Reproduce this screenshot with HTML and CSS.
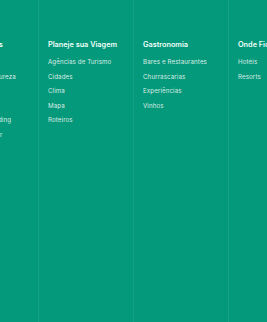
FILE: index.html
```html
<!DOCTYPE html>
<html lang="pt-BR">
<head>
  <meta charset="UTF-8" />
  <meta name="viewport" content="width=device-width, initial-scale=1.0"/>
  <title>Menu</title>
  <link rel="stylesheet" href="styles.css">
</head>
<body>
  <div class="menu">
    <div class="col">
      <h3>Ecoatividades</h3>
      <ul>
        <li>Trilhas</li>
        <li>Turismo de Natureza</li>
        <li>Cachoeiras</li>
        <li>Praias</li>
        <li>Rapel e Paragliding</li>
        <li>Esportes no Mar</li>
      </ul>
    </div>

    <div class="col">
      <h3>Planeje sua Viagem</h3>
      <ul>
        <li>Agências de Turismo</li>
        <li>Cidades</li>
        <li>Clima</li>
        <li>Mapa</li>
        <li>Roteiros</li>
      </ul>
    </div>

    <div class="col">
      <h3>Gastronomia</h3>
      <ul>
        <li>Bares e Restaurantes</li>
        <li>Churrascarias</li>
        <li>Experiências</li>
        <li>Vinhos</li>
      </ul>
    </div>

    <div class="col">
      <h3>Onde Ficar</h3>
      <ul>
        <li>Hotéis</li>
        <li>Resorts</li>
      </ul>
    </div>
  </div>
</body>
</html>
```

FILE: styles.css
```css
* {
  box-sizing: border-box;
}

html, body {
  margin: 0;
  padding: 0;
  height: 100%;
}

body {
  background: #04997a;
  font-family: 'Inter', 'Noto Sans', sans-serif;
  overflow: hidden;
}

.menu {
  display: flex;
  height: 100%;
  margin-left: -56px;
}

.col {
  flex: 0 0 95px;
  padding: 40px 0 0 9px;
  border-right: 1px solid rgba(255, 255, 255, 0.08);
  white-space: nowrap;
}

.col h3 {
  margin: 0 0 5px;
  font-size: 7.3px;
  font-weight: 600;
  line-height: 10px;
  color: #f2fffa;
}

.col ul {
  list-style: none;
  margin: 0;
  padding: 0;
}

.col li {
  font-size: 6.2px;
  letter-spacing: 0.1px;
  line-height: 14.5px;
  color: rgba(255, 255, 255, 0.85);
}
```
